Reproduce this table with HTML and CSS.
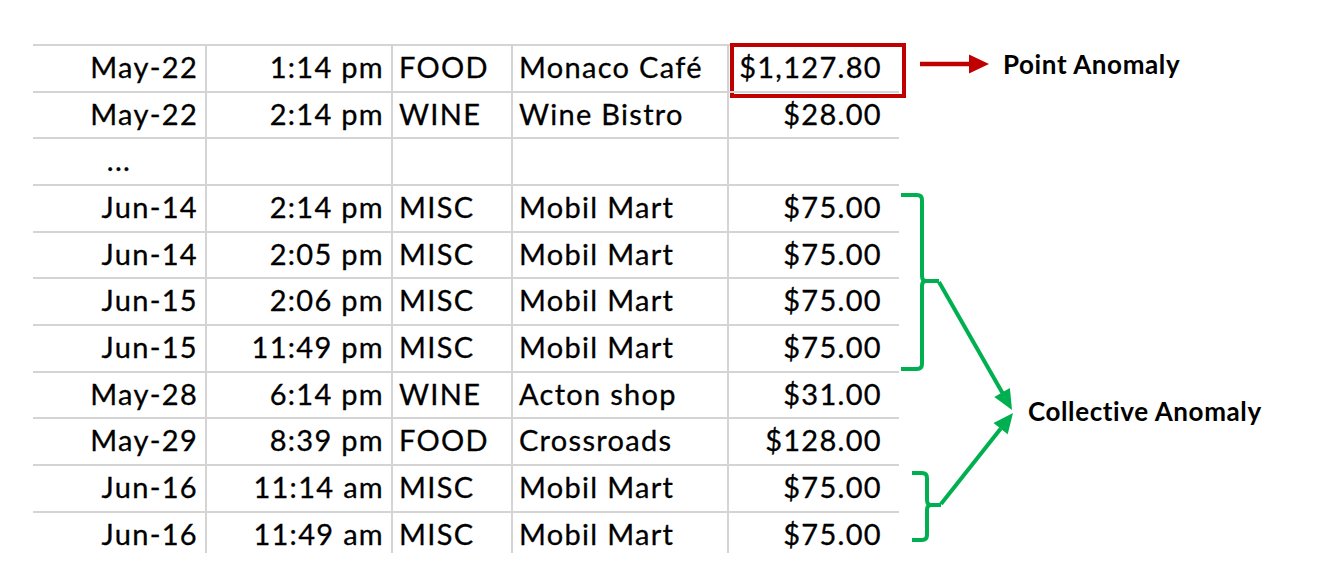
FILE: index.html
```html
<!DOCTYPE html>
<html lang="en">
<head>
<meta charset="utf-8">
<title>Point and Collective Anomaly</title>
<link rel="stylesheet" href="styles.css">
</head>
<body>
<div class="page">
  <div class="sheet">
    <div class="c r">May-22</div><div class="c r">1:14 pm</div><div class="c l">FOOD</div><div class="c l">Monaco Café</div><div class="c r amt hl">$1,127.80<span class="redbox"></span></div>
    <div class="c r">May-22</div><div class="c r">2:14 pm</div><div class="c l">WINE</div><div class="c l">Wine Bistro</div><div class="c r amt">$28.00</div>
    <div class="c mid">...</div><div class="c r"></div><div class="c l"></div><div class="c l"></div><div class="c r amt"></div>
    <div class="c r">Jun-14</div><div class="c r">2:14 pm</div><div class="c l">MISC</div><div class="c l">Mobil Mart</div><div class="c r amt">$75.00</div>
    <div class="c r">Jun-14</div><div class="c r">2:05 pm</div><div class="c l">MISC</div><div class="c l">Mobil Mart</div><div class="c r amt">$75.00</div>
    <div class="c r">Jun-15</div><div class="c r">2:06 pm</div><div class="c l">MISC</div><div class="c l">Mobil Mart</div><div class="c r amt">$75.00</div>
    <div class="c r">Jun-15</div><div class="c r">11:49 pm</div><div class="c l">MISC</div><div class="c l">Mobil Mart</div><div class="c r amt">$75.00</div>
    <div class="c r">May-28</div><div class="c r">6:14 pm</div><div class="c l">WINE</div><div class="c l">Acton shop</div><div class="c r amt">$31.00</div>
    <div class="c r">May-29</div><div class="c r">8:39 pm</div><div class="c l">FOOD</div><div class="c l">Crossroads</div><div class="c r amt">$128.00</div>
    <div class="c r">Jun-16</div><div class="c r">11:14 am</div><div class="c l">MISC</div><div class="c l">Mobil Mart</div><div class="c r amt">$75.00</div>
    <div class="c r">Jun-16</div><div class="c r">11:49 am</div><div class="c l">MISC</div><div class="c l">Mobil Mart</div><div class="c r amt">$75.00</div>
  </div>

  <svg class="annot" width="1324" height="576" viewBox="0 0 1324 576" aria-hidden="true">
    <g class="red">
      <line x1="920" y1="64" x2="972" y2="64" stroke="#c00000" stroke-width="4.5"/>
      <polygon points="969,54.5 989,64 969,73.5" fill="#c00000"/>
    </g>
    <g fill="none" stroke="#00b050" stroke-width="4" stroke-linejoin="round">
      <path d="M901 195 L917 195 Q922 195 922 200 L922 276 Q922 281 926 281 L939 281 M926 281 Q922 281 922 286 L922 364 Q922 369 917 369 L901 369"/>
      <path d="M912 473 L922 473 Q927 473 927 478 L927 500 Q927 505 931 505 L941 505 M931 505 Q927 505 927 510 L927 535 Q927 540 922 540 L912 540"/>
      <line x1="939" y1="282" x2="1002.5" y2="393"/>
      <line x1="941" y1="504" x2="1000.8" y2="428.5"/>
    </g>
    <g fill="#00b050">
      <polygon points="994.3,397.1 1009.9,388.1 1012,410"/>
      <polygon points="1007.7,434.3 993.5,423.1 1013,413"/>
    </g>
  </svg>

  <div class="label point">Point Anomaly</div>
  <div class="label collective">Collective Anomaly</div>
</div>
</body>
</html>
```

FILE: styles.css
```css
html, body {
  margin: 0;
  padding: 0;
  background: #ffffff;
}

.page {
  position: relative;
  width: 1324px;
  height: 576px;
  overflow: hidden;
  font-family: "Lato", "Open Sans", sans-serif;
  color: #000000;
}

.sheet {
  margin: 44px 0 0 33px;
  display: grid;
  grid-template-columns: 172px 186px 120px 216px 172px;
  grid-template-rows: repeat(10, 46.67px) 42px;
  width: 866px;
}

.c {
  box-sizing: border-box;
  border-top: 2px solid #d4d4d4;
  border-left: 2px solid #d4d4d4;
  font-size: 29px;
  letter-spacing: 1.3px;
  line-height: 42px;
  white-space: nowrap;
  position: relative;
  -webkit-text-stroke: 0.3px #000000;
}

.c:nth-child(5n+1) {
  border-left: none;
}

.r {
  text-align: right;
  padding-right: 7px;
}

.l {
  text-align: left;
  padding-left: 6px;
}

.mid {
  text-align: center;
}

.amt {
  padding-right: 17px;
}

.redbox {
  position: absolute;
  box-sizing: border-box;
  left: 1px;
  top: -3px;
  width: 176px;
  height: 55px;
  border: 4px solid #c00000;
}

.annot {
  position: absolute;
  left: 0;
  top: 0;
  pointer-events: none;
}

.label {
  position: absolute;
  font-weight: 700;
  font-size: 26px;
  letter-spacing: 0.6px;
  line-height: 30px;
  white-space: nowrap;
}

.point {
  left: 1003px;
  top: 49px;
}

.collective {
  left: 1028px;
  top: 396px;
}
```
